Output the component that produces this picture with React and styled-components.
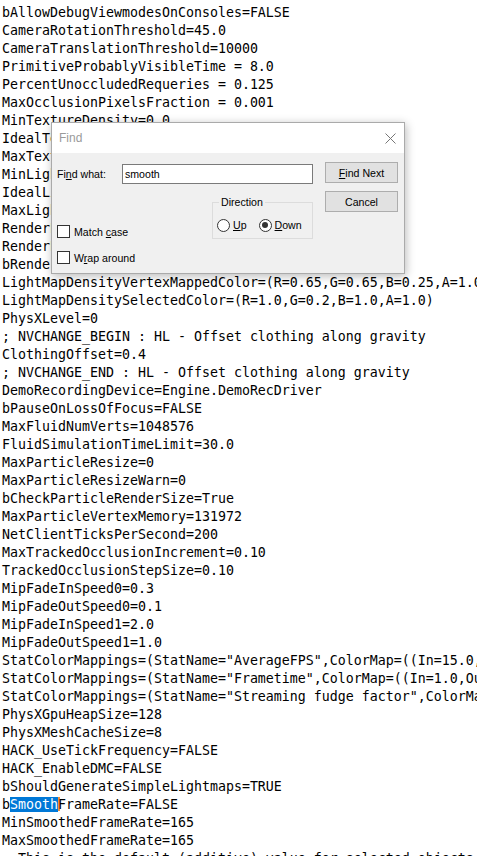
import React from 'react';
import styled, { createGlobalStyle } from 'styled-components';

const GlobalStyle = createGlobalStyle`
    html, body {
        margin: 0;
        padding: 0;
        background: #ffffff;
    }
`

const lines = [
    'bAllowDebugViewmodesOnConsoles=FALSE',
    'CameraRotationThreshold=45.0',
    'CameraTranslationThreshold=10000',
    'PrimitiveProbablyVisibleTime = 8.0',
    'PercentUnoccludedRequeries = 0.125',
    'MaxOcclusionPixelsFraction = 0.001',
    'MinTextureDensity=0.0',
    'IdealTextureDensity=13.0',
    'MaxTextureDensity=55.0',
    'MinLightMapDensity=0.0',
    'IdealLightMapDensity=0.2',
    'MaxLightMapDensity=0.8',
    'RenderLightMapDensityGrayscaleScale=1.0',
    'RenderLightMapDensityColorScale=1.0',
    'bRenderLightMapDensityGrayscale=FALSE',
    'LightMapDensityVertexMappedColor=(R=0.65,G=0.65,B=0.25,A=1.0)',
    'LightMapDensitySelectedColor=(R=1.0,G=0.2,B=1.0,A=1.0)',
    'PhysXLevel=0',
    '; NVCHANGE_BEGIN : HL - Offset clothing along gravity',
    'ClothingOffset=0.4',
    '; NVCHANGE_END : HL - Offset clothing along gravity',
    'DemoRecordingDevice=Engine.DemoRecDriver',
    'bPauseOnLossOfFocus=FALSE',
    'MaxFluidNumVerts=1048576',
    'FluidSimulationTimeLimit=30.0',
    'MaxParticleResize=0',
    'MaxParticleResizeWarn=0',
    'bCheckParticleRenderSize=True',
    'MaxParticleVertexMemory=131972',
    'NetClientTicksPerSecond=200',
    'MaxTrackedOcclusionIncrement=0.10',
    'TrackedOcclusionStepSize=0.10',
    'MipFadeInSpeed0=0.3',
    'MipFadeOutSpeed0=0.1',
    'MipFadeInSpeed1=2.0',
    'MipFadeOutSpeed1=1.0',
    'StatColorMappings=(StatName="AverageFPS",ColorMap=((In=15.0,Out=(R=255)),(In=30,Out=(R=255,G=255)),(In=45.0,Out=(G=255))))',
    'StatColorMappings=(StatName="Frametime",ColorMap=((In=1.0,Out=(G=255)),(In=25.0,Out=(G=255)),(In=29.0,Out=(R=255,G=255))))',
    'StatColorMappings=(StatName="Streaming fudge factor",ColorMap=((In=0.0,Out=(G=255)),(In=1.0,Out=(G=255))))',
    'PhysXGpuHeapSize=128',
    'PhysXMeshCacheSize=8',
    'HACK_UseTickFrequency=FALSE',
    'HACK_EnableDMC=FALSE',
    'bShouldGenerateSimpleLightmaps=TRUE',
    null,
    'MinSmoothedFrameRate=165',
    'MaxSmoothedFrameRate=165',
    '; This is the default (additive) value for selected objects',
]

const Editor = styled.div`
    position: relative;
    width: 477px;
    height: 856px;
    overflow: hidden;
    box-sizing: border-box;
    padding: 4px 0 0 2px;
    background: #ffffff;
    color: #000000;
    font-family: 'DejaVu Sans Mono', 'Liberation Mono', monospace;
    font-size: 13.29px;
    line-height: 18px;
`

const Line = styled.div`
    height: 18px;
    white-space: pre;
`

const Selected = styled.span`
    background: #0078d7;
    color: #ffffff;
`

const Caret = styled.span`
    display: inline-block;
    width: 2px;
    height: 14px;
    margin-right: -2px;
    vertical-align: -2px;
    background: #f0903a;
`

const Dialog = styled.div`
    position: absolute;
    left: 51px;
    top: 122px;
    width: 354px;
    height: 152px;
    box-sizing: border-box;
    border: 1px solid #aaaaaa;
    background: #f0f0f0;
    box-shadow: 1px 2px 9px rgba(0, 0, 0, 0.28);
    font-family: 'Liberation Sans', Arial, sans-serif;
    font-size: 10.6px;
    color: #000000;
    display: flex;
    flex-direction: column;
`

const TitleBar = styled.div`
    height: 30px;
    flex-shrink: 0;
    background: #ffffff;
    display: flex;
    align-items: center;
    justify-content: space-between;
    padding: 0 8px 0 7px;
`

const Title = styled.span`
    font-size: 12px;
    color: #9a9a9a;
`

const Body = styled.div`
    flex: 1;
    display: flex;
    gap: 12px;
    padding: 9px 6px 0 5px;
`

const LeftCol = styled.div`
    width: 256px;
    display: flex;
    flex-direction: column;
`

const FindRow = styled.div`
    display: flex;
    align-items: center;
    margin-top: 2px;
    height: 20px;
`

const Label = styled.span`
    width: 65px;
    flex-shrink: 0;
`

const Input = styled.div`
    flex: 1;
    height: 20px;
    box-sizing: border-box;
    border: 1px solid #7a7a7a;
    background: #ffffff;
    padding: 0 2px;
    display: flex;
    align-items: center;
`

const Options = styled.div`
    display: flex;
    justify-content: space-between;
    align-items: flex-start;
    margin-top: 11px;
`

const Checks = styled.div`
    display: flex;
    flex-direction: column;
    gap: 13px;
    margin-top: 30px;
`

const CheckRow = styled.label`
    display: flex;
    align-items: center;
    gap: 4px;
    height: 13px;
`

const Box = styled.span`
    width: 13px;
    height: 13px;
    box-sizing: border-box;
    border: 1px solid #333333;
    background: #ffffff;
`

const Group = styled.fieldset`
    width: 101px;
    height: 44px;
    box-sizing: border-box;
    margin: 0;
    padding: 0;
    border: 1px solid #dcdcdc;
`

const Legend = styled.legend`
    margin-left: 6px;
    padding: 0 2px;
    line-height: 14px;
    font-size: 10.6px;
`

const RadioRow = styled.div`
    display: flex;
    align-items: center;
    height: 14px;
    margin-top: 9px;
    padding-left: 4px;
`

const RadioItem = styled.span`
    display: flex;
    align-items: center;
    gap: 3px;
    margin-right: ${props => props.gap || 0}px;
`

const Circle = styled.span`
    position: relative;
    width: 13px;
    height: 13px;
    box-sizing: border-box;
    border-radius: 50%;
    border: 1px solid #333333;
    background: #ffffff;

    &::after {
        content: '';
        display: ${props => props.checked ? 'block' : 'none'};
        position: absolute;
        left: 2.5px;
        top: 2.5px;
        width: 6px;
        height: 6px;
        border-radius: 50%;
        background: #333333;
    }
`

const U = styled.span`
    text-decoration: underline;
    text-underline-offset: 1px;
`

const Buttons = styled.div`
    display: flex;
    flex-direction: column;
    gap: 8px;
`

const Button = styled.div`
    width: 73px;
    height: 21px;
    box-sizing: border-box;
    border: 1px solid #adadad;
    background: #e1e1e1;
    display: flex;
    align-items: center;
    justify-content: center;
`

const CloseIcon = () => (
    <svg width="11" height="11" viewBox="0 0 11 11">
        <path d="M0.5 0.5 L10.5 10.5 M10.5 0.5 L0.5 10.5" stroke="#767676" strokeWidth="1" fill="none"/>
    </svg>
)

const FindDialog = () => (
    <Dialog>
        <TitleBar>
            <Title>Find</Title>
            <CloseIcon/>
        </TitleBar>
        <Body>
            <LeftCol>
                <FindRow>
                    <Label>Fi<U>n</U>d what:</Label>
                    <Input>smooth</Input>
                </FindRow>
                <Options>
                    <Checks>
                        <CheckRow><Box/><span>Match <U>c</U>ase</span></CheckRow>
                        <CheckRow><Box/><span>W<U>r</U>ap around</span></CheckRow>
                    </Checks>
                    <Group>
                        <Legend>Direction</Legend>
                        <RadioRow>
                            <RadioItem gap={12}><Circle/><span><U>U</U>p</span></RadioItem>
                            <RadioItem><Circle checked/><span><U>D</U>own</span></RadioItem>
                        </RadioRow>
                    </Group>
                </Options>
            </LeftCol>
            <Buttons>
                <Button><span><U>F</U>ind Next</span></Button>
                <Button>Cancel</Button>
            </Buttons>
        </Body>
    </Dialog>
)

export default function App() {
    return (
        <>
            <GlobalStyle/>
            <Editor>
                {lines.map((text, i) => text === null ? (
                    <Line key={i}>b<Selected>Smooth</Selected><Caret/>FrameRate=FALSE</Line>
                ) : (
                    <Line key={i}>{text}</Line>
                ))}
                <FindDialog/>
            </Editor>
        </>
    )
}
